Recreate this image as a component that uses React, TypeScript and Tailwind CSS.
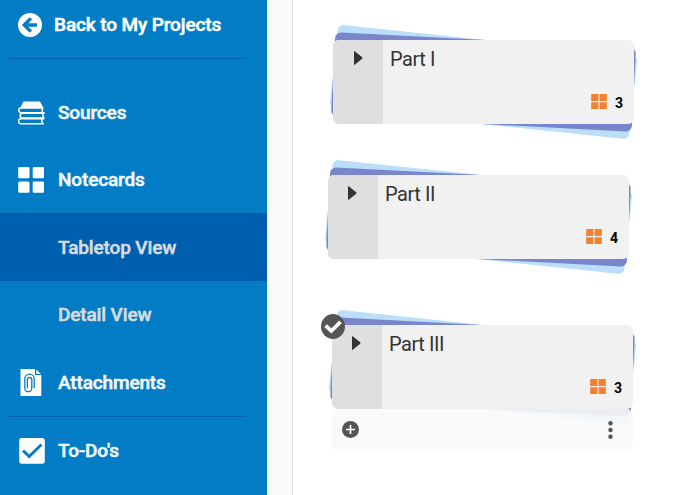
import React from "react";

const ROBOTO = "font-['Roboto','Liberation_Sans',sans-serif]";

function BackIcon() {
  return (
    <svg className="block h-6 w-6" viewBox="0 0 24 24">
      <circle cx="12" cy="12" r="12" fill="#fff" />
      <path d="M19 12H6.500M12.900 5.300L6.200 12l6.700 6.700" fill="none" stroke="#027dc5" strokeWidth="3.300" />
    </svg>
  );
}

function BooksIcon() {
  return (
    <svg className="relative left-px block h-6 w-7" viewBox="0 0 28 24">
      <path d="M5.500 0.500H22L25.500 7H2.200z" fill="#fff" />
      <path
        d="M25.500 7H3a2.200 2.200 0 0 0 0 4.700H26.500M26.800 12.300H4.500a2.200 2.200 0 0 0 0 4.700H26.800M26 17.700H3a2.300 2.300 0 0 0 0 5H26M24.300 7.500V12M25 12.500V17M24 18V22.500"
        fill="none"
        stroke="#fff"
        strokeWidth="1.500"
      />
    </svg>
  );
}

function GridIcon() {
  return (
    <svg className="block h-[26px] w-[26px]" viewBox="0 0 26 26" fill="#fff">
      <rect x="0.200" y="0" width="11.300" height="11.300" rx="1.300" />
      <rect x="14.700" y="0" width="11.300" height="11.300" rx="1.300" />
      <rect x="0.200" y="14.500" width="11.300" height="11.300" rx="1.300" />
      <rect x="14.700" y="14.500" width="11.300" height="11.300" rx="1.300" />
    </svg>
  );
}

function AttachmentIcon() {
  return (
    <svg className="block h-[27px] w-[22px]" viewBox="0 0 22 27">
      <path d="M0.500 0H15v6h6.300v21H0.500z" fill="#fff" />
      <path d="M16.300 0.500L21 5h-4.700z" fill="#fff" />
      <path
        d="M14.200 18.500V9.800a4.700 4.700 0 0 0-9.400 0v9.400a3.500 3.500 0 0 0 7 0V10.500a2.200 2.200 0 0 0-4.400 0v8"
        fill="none"
        stroke="#027dc5"
        strokeWidth="1.300"
        strokeLinecap="round"
      />
    </svg>
  );
}

function CheckboxIcon() {
  return (
    <svg className="ml-px block h-[26px] w-[26px]" viewBox="0 0 26 26">
      <rect x="0.200" width="25.600" height="25.700" rx="2.700" fill="#fff" />
      <path d="M4 12.500l6.200 6L22.500 6.500" fill="none" stroke="#027dc5" strokeWidth="2.900" />
    </svg>
  );
}

function NavItem({ icon, label, sub, active }: { icon?: React.ReactNode; label: string; sub?: boolean; active?: boolean }) {
  return (
    <div className={`flex h-[67.500px] items-center pt-[2px] pl-[17px] ${active ? "bg-[#005eaf]" : ""}`}>
      <div className="flex w-[28px] shrink-0 justify-center">{icon}</div>
      <span
        className={`ml-[13px] text-[19px] leading-6 font-medium tracking-[-0.140px] whitespace-nowrap [-webkit-text-stroke:0.500px_currentColor] ${
          sub ? "text-[#d9dcdf]" : "text-[#f4f8fc]"
        }`}
      >
        {label}
      </span>
    </div>
  );
}

function Card({ title, count, arrow }: { title: string; count: number; arrow: string }) {
  return (
    <div className="relative h-[84px] w-[301px]">
      <div className="absolute inset-0 rotate-6 rounded-[6px] bg-[#bbdefb]" />
      <div className="absolute inset-0 rotate-3 rounded-[6px] bg-[#7986cb]" />
      <div className="relative flex h-full overflow-hidden rounded-[6px] bg-[#f1f1f1]">
        <div className="w-[50px] shrink-0 bg-[#dfdfdf] pt-[11px]">
          <svg className={`block h-[14px] w-[9px] ${arrow}`} viewBox="0 0 9 14">
            <path d="M0 0.500Q0-.3 1 .5L8.200 6.300Q8.700 7 8.200 7.700L1 13.500Q0 14.300 0 13.500z" fill="#333" />
          </svg>
        </div>
        <div className="flex grow flex-col justify-between pt-[6px] pr-[10px] pb-[14px] pl-[7px]">
          <div className="text-[20px] leading-[27px] tracking-[-0.450px] text-[#333]">{title}</div>
          <div className="flex items-center justify-end">
            <svg className="relative -top-px block h-[15px] w-4" viewBox="0 0 16 15" fill="#f47f2d">
              <path d="M.2 0H7.400V7H.2zM8.600 0H15.800V7H8.600zM.2 8.200H7.400V15H.2zM8.600 8.200H15.800V15H8.600z" />
            </svg>
            <span className="relative top-px ml-2 w-[9px] text-[14px] leading-4 font-bold text-black">{count}</span>
          </div>
        </div>
      </div>
    </div>
  );
}

export default function App() {
  return (
    <div className={`flex h-[495px] w-[677px] overflow-hidden bg-white ${ROBOTO}`}>
      <aside className="h-full w-[267px] shrink-0 overflow-hidden bg-[#027dc5]">
        <div className="mr-[21px] ml-2 flex h-[59px] items-start border-b border-[#005eaf] pt-[13px] pl-[9.500px]">
          <BackIcon />
          <span className="ml-[12.500px] text-[19px] leading-6 font-medium tracking-[-0.120px] whitespace-nowrap text-white [-webkit-text-stroke:0.500px_currentColor]">
            Back to My Projects
          </span>
        </div>
        <div className="pt-[19px]">
          <NavItem icon={<BooksIcon />} label="Sources" />
          <NavItem icon={<GridIcon />} label="Notecards" />
          <NavItem label="Tabletop View" sub active />
          <NavItem label="Detail View" sub />
          <NavItem icon={<AttachmentIcon />} label="Attachments" />
          <div className="mr-[21px] ml-2 h-px bg-[#005eaf]" />
          <NavItem icon={<CheckboxIcon />} label="To-Do's" />
        </div>
      </aside>
      <div className="w-[26px] shrink-0 border-r border-[#dedede] bg-[#fafafa]" />
      <main className="grow pt-10">
        <div className="ml-10">
          <Card title="Part I" count={3} arrow="ml-[21px]" />
        </div>
        <div className="mt-[51px] ml-[35px]">
          <Card title="Part II" count={4} arrow="ml-5" />
        </div>
        <div className="relative mt-[66px] ml-[39px] w-[301px]">
          <Card title="Part III" count={3} arrow="ml-5" />
          <div className="relative flex h-[42px] items-center justify-between rounded-[6px] bg-[#fafafa]/90 pr-5 pb-px pl-[10px]">
            <svg className="block h-[17px] w-[17px]" viewBox="0 0 17 17">
              <circle cx="8.500" cy="8.500" r="8.500" fill="#555" />
              <path d="M8.500 4V13M4 8.500H13" stroke="#fff" strokeWidth="1.700" />
            </svg>
            <svg className="block h-[18px] w-[5px]" viewBox="0 0 5 18" fill="#555">
              <circle cx="2.500" cy="2.200" r="2.200" />
              <circle cx="2.500" cy="9" r="2.200" />
              <circle cx="2.500" cy="15.800" r="2.200" />
            </svg>
          </div>
          <svg className="absolute top-[-11px] left-[-11px] h-[25px] w-6" viewBox="0 0 24 25">
            <ellipse cx="12" cy="12.500" rx="12" ry="12.500" fill="#555" />
            <path d="M6 13l4.300 4L18.200 9.300" fill="none" stroke="#fff" strokeWidth="3.800" strokeLinecap="square" />
          </svg>
        </div>
      </main>
    </div>
  );
}
